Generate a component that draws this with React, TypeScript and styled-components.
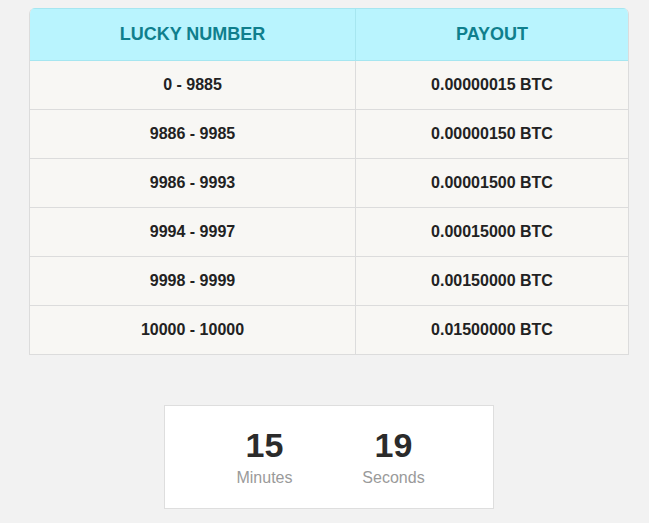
import { Fragment } from 'react'
import styled, { createGlobalStyle } from 'styled-components'

const GlobalStyle = createGlobalStyle`
  body {
    margin: 0;
    background: #f2f2f2;
    font-family: "Liberation Sans", Arial, sans-serif;
  }
`

const Page = styled.div`
  width: 600px;
  padding: 8px 0 0 29px;
`

const Table = styled.div`
  display: grid;
  grid-template-columns: 326px 1fr;
  border-radius: 6px 6px 0 0;
  border: 1px solid #dcdcdc;
  border-top: none;
  overflow: hidden;
`

const HeadCell = styled.div<{ last?: boolean }>`
  height: 51px;
  display: flex;
  align-items: center;
  justify-content: center;
  background: #b9f4fe;
  border-top: 1px solid #a6e6f0;
  border-bottom: 1px solid #a6e6f0;
  border-right: ${({ last }) => (last ? 'none' : '1px solid #a6e6f0')};
  color: #0f7f8d;
  font-size: 18px;
  font-weight: bold;
`

const Cell = styled.div<{ last?: boolean; bottom?: boolean }>`
  height: 48px;
  display: flex;
  align-items: center;
  justify-content: center;
  background: #f8f7f4;
  border-bottom: ${({ bottom }) => (bottom ? 'none' : '1px solid #dcdcdc')};
  border-right: ${({ last }) => (last ? 'none' : '1px solid #dcdcdc')};
  color: #222;
  font-size: 16px;
  font-weight: bold;
`

const Countdown = styled.div`
  width: 328px;
  margin: 50px auto 0;
  background: #fff;
  border: 1px solid #dedede;
  display: flex;
  justify-content: center;
  padding: 19px 0 20px;
`

const Unit = styled.div`
  width: 129px;
  display: flex;
  flex-direction: column;
  align-items: center;
`

const Amount = styled.div`
  font-size: 34px;
  font-weight: bold;
  color: #2b2b2b;
  line-height: 40px;
`

const Label = styled.div`
  margin-top: 3px;
  font-size: 16px;
  color: #9a9a9a;
  line-height: 20px;
`

const rows = [
  ['0 - 9885', '0.00000015 BTC'],
  ['9886 - 9985', '0.00000150 BTC'],
  ['9986 - 9993', '0.00001500 BTC'],
  ['9994 - 9997', '0.00015000 BTC'],
  ['9998 - 9999', '0.00150000 BTC'],
  ['10000 - 10000', '0.01500000 BTC'],
]

const App = () => {
  return (
    <>
      <GlobalStyle />
      <Page>
        <Table>
          <HeadCell>LUCKY NUMBER</HeadCell>
          <HeadCell last>PAYOUT</HeadCell>
          {rows.map(([range, payout], i) => (
            <Fragment key={range}>
              <Cell bottom={i === rows.length - 1}>{range}</Cell>
              <Cell last bottom={i === rows.length - 1}>
                {payout}
              </Cell>
            </Fragment>
          ))}
        </Table>
        <Countdown>
          <Unit>
            <Amount>15</Amount>
            <Label>Minutes</Label>
          </Unit>
          <Unit>
            <Amount>19</Amount>
            <Label>Seconds</Label>
          </Unit>
        </Countdown>
      </Page>
    </>
  )
}

export default App
